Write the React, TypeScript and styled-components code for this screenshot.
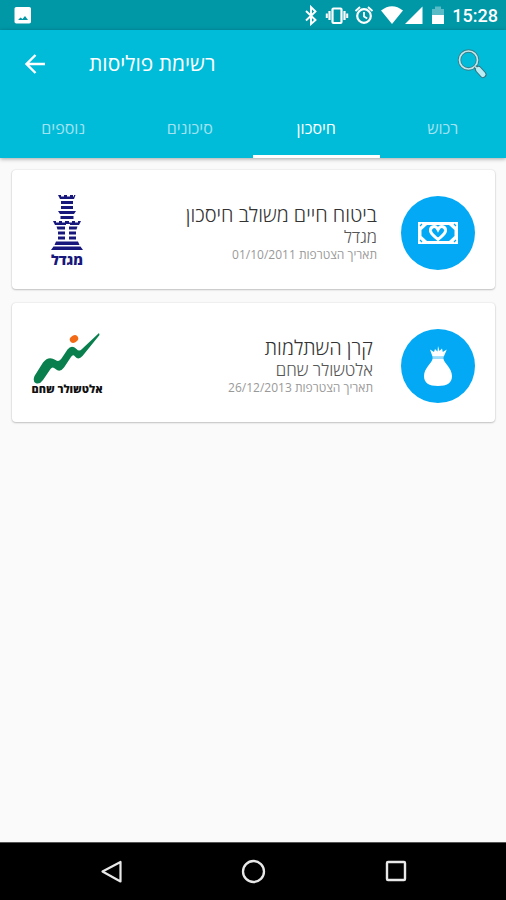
import React from "react";
import styled, { createGlobalStyle } from "styled-components";

const GlobalStyle = createGlobalStyle`
  *, *::before, *::after { box-sizing: border-box; }
  body {
    margin: 0;
    background: #fafafa;
    font-family: "Open Sans", "Noto Sans", sans-serif;
  }
  button { font: inherit; border: 0; padding: 0; background: none; color: inherit; cursor: pointer; }
  svg { display: block; }
`;

const Screen = styled.div`
  min-height: 100vh;
  display: flex;
  flex-direction: column;
`;

const StatusBar = styled.div`
  height: 30px;
  padding: 0 8px 0 14px;
  display: flex;
  align-items: center;
  justify-content: space-between;
  background: #0097a7;
  color: #fff;
`;

const StatusIcons = styled.div`
  display: flex;
  align-items: center;
`;

const Clock = styled.time`
  margin-left: 6px;
  padding-top: 2px;
  font: 500 18px/28px Roboto, sans-serif;
`;

const Header = styled.header`
  position: relative;
  background: #00bcd9;
  color: #fff;
  box-shadow: 0 1px 4px rgba(0, 0, 0, 0.35);
`;

const Toolbar = styled.div`
  height: 68px;
  padding: 0 14px 0 15px;
  display: flex;
  align-items: center;
`;

const IconButton = styled.button`
  width: 40px;
  height: 40px;
  display: grid;
  place-items: center;
`;

const Title = styled.h1`
  margin: 0 auto 0 34px;
  padding-bottom: 2px;
  font-size: 21px;
  line-height: 30px;
  font-weight: 500;
`;

const Tabs = styled.nav`
  display: grid;
  grid-template-columns: repeat(4, 1fr);
`;

const Tab = styled.button<{ $active?: boolean }>`
  && {
    height: 60px;
    padding-top: 3px;
    border-bottom: 3px solid ${(p) => (p.$active ? "#fff" : "transparent")};
    font-size: 16px;
    line-height: 24px;
    font-weight: ${(p) => (p.$active ? 500 : 400)};
    color: ${(p) => (p.$active ? "#fff" : "#a3e2f0")};
  }
`;

const List = styled.main`
  flex: 1;
  padding: 12px 11px 12px 12px;
  display: flex;
  flex-direction: column;
  gap: 14px;
`;

const Card = styled.article`
  min-height: 119px;
  padding: 6px 20px 0;
  display: flex;
  align-items: center;
  background: #fff;
  border-radius: 4px;
  box-shadow: 0 0 2px rgba(0, 0, 0, 0.14), 0 1px 2px rgba(0, 0, 0, 0.2);
`;

const Brand = styled.div`
  width: 70px;
  padding-bottom: 6px;
  display: flex;
  flex-direction: column;
  align-items: center;
`;

const BrandName = styled.span<{ $color: string; $size: number }>`
  font-weight: 800;
  font-size: ${(p) => p.$size}px;
  line-height: 10px;
  white-space: nowrap;
  color: ${(p) => p.$color};
`;

const Details = styled.div<{ $gap: number }>`
  flex: 1;
  margin-right: ${(p) => p.$gap}px;
  font-weight: 300;
`;

const PolicyName = styled.h2`
  margin: 0;
  font-size: 20px;
  line-height: 24px;
  font-weight: 300;
  color: #333;
`;

const Company = styled.p`
  margin: 0;
  font-size: 17px;
  line-height: 20px;
  color: #555;
`;

const Joined = styled.p`
  margin: 0;
  font-size: 12px;
  line-height: 16px;
  font-weight: 400;
  color: #999;
`;

const Badge = styled.div`
  width: 74px;
  height: 74px;
  border-radius: 50%;
  display: grid;
  place-items: center;
  background: #03a9f4;
`;

const SystemNav = styled.nav`
  height: 58px;
  padding: 0 41px;
  display: grid;
  grid-template-columns: repeat(3, 1fr);
  background: #000;
  border-top: 1px solid #555;
`;

const NavButton = styled.button`
  display: grid;
  place-items: center;
`;

const StatusGlyphs = () => (
  <svg width="142" height="22" viewBox="304 4 142 22" fill="none" stroke="#fff">
    <path d="M306 11 L315.500 20 L311 24 V7 L315.500 11.500 L306 20.500" strokeWidth="1.900" />
    <rect x="332.500" y="8.500" width="9" height="14.500" rx="1" strokeWidth="2.200" />
    <path d="M329.500 11v9M344.500 11v9" strokeWidth="2.200" />
    <path d="M326.800 13.500v4.500M347.200 13.500v4.500" strokeWidth="2" />
    <circle cx="364" cy="16" r="6.800" strokeWidth="2.200" />
    <path d="M364 12v4.500l3.200 2M355.500 11l4.500-4M372.500 11l-4.500-4" strokeWidth="1.800" />
    <path d="M381 10.500 Q392 2 403 10.500 L392 24Z" fill="#fff" stroke="none" />
    <path d="M405 24 L422.500 6.500 V24Z" fill="#fff" stroke="none" />
    <path d="M432 15V9h3V6.500h6V9h3v6Z" fill="#fff" fillOpacity="0.35" stroke="none" />
    <path d="M432 15h12v9h-12Z" fill="#fff" stroke="none" />
  </svg>
);

const PictureGlyph = () => (
  <svg width="18" height="18" viewBox="0 0 18 18">
    <rect x="0.500" y="1" width="16.500" height="16.500" rx="1.800" fill="#fff" />
    <path d="M4 14l2.500-2.500 2 1.500 2.500-3 3 4Z" fill="#0097a7" />
  </svg>
);

const BackArrow = () => (
  <svg width="22" height="22" viewBox="0 0 22 22" fill="none" stroke="#fff" strokeWidth="2.400">
    <path d="M21 11H3M11.500 2 2.500 11l9 9" />
  </svg>
);

const Magnifier = () => (
  <svg width="32" height="32" viewBox="0 0 32 32" fill="none">
    <circle cx="12.500" cy="12" r="9" stroke="#35808c" strokeWidth="3.400" />
    <circle cx="12.500" cy="12" r="9" stroke="#c5e6ea" strokeWidth="1.700" />
    <path d="M19 18.500l3 3" stroke="#35717c" strokeWidth="3.500" />
    <path d="M22.500 21.500l4.500 5" stroke="#35717c" strokeWidth="7" strokeLinecap="round" />
    <path d="M22.500 21.500l4.500 5" stroke="#b8edf5" strokeWidth="5" strokeLinecap="round" />
    <path d="M19 18.500l2.500 2.500" stroke="#c5e6ea" strokeWidth="1.500" />
  </svg>
);

const MigdalTower = () => (
  <svg width="34" height="60" viewBox="0 0 34 60" fill="#17177c">
    <path d="M8 0h3v1.500h3V0h3v1.500h3V0h3v1.500h1V0h1.500L24 4H10Z" />
    <path d="M11 6h12v3H11ZM11 11h12v3H11ZM8 16h18l-2 3H10ZM10.500 21h13v3h-13Z" />
    <path d="M3 26h3v1.500h3V26h3v1.500h3V26h4v1.500h3V26h3v1.500h3V26h3l-2 4h-9v-1h-4v1H5Z" />
    <path d="M6.500 31.500H15v3H7.500ZM19 31.500h8.500l-1 3H19ZM8 36.500h7v3H8ZM19 36.500h7v3h-7ZM8 41.500h7v3H8ZM19 41.500h7v3h-7Z" />
    <path d="M6 46.500h22l1.500 3.500h-25ZM3.500 51.500h27L33 55H1Z" />
  </svg>
);

const AltshulerMark = () => (
  <svg width="68" height="52" viewBox="0 0 68 52">
    <ellipse cx="41" cy="7" rx="4.400" ry="3.500" transform="rotate(-30 41 7)" fill="#f26a16" />
    <path
      d="M66 1 L66.500 3 L49.500 24 Q45.500 28.500 42 24.500 Q40 22 38 25 L31 35.500 Q27 41 22.500 37 Q19.500 34 17.500 37 L10 48 Q6.500 53 2.500 51 Q-0.500 49 1.500 44 L10 30.500 Q15.500 23.500 22.500 28 Q26 30.500 28.500 26.500 L34.500 17.500 Q38.500 12.500 43.500 17 Q46 20 49 17Z"
      fill="#087f4d"
    />
  </svg>
);

const Banknote = () => (
  <svg width="42" height="24" viewBox="0 0 42 24">
    <path d="M1 1h40v22H1Z" fill="#fff" />
    <path d="M10 4h22l5.500 5v6L32 20H10l-5.500-5V9Z" fill="#03a9f4" />
    <path d="M3 5l2-2M37 3l2 2M3 19l2 2M39 19l-2 2" stroke="#03a9f4" strokeWidth="1.200" />
    <path
      d="M21 8.500C18.500 3.500 13 5.500 13.500 10c.5 3.500 4.500 5.500 7.500 8.500 3-3 7-5 7.500-8.500C29 5.500 23.500 3.500 21 8.500Z"
      fill="#03a9f4"
      stroke="#fff"
      strokeWidth="3"
    />
  </svg>
);

const MoneyBag = () => (
  <svg width="30" height="42" viewBox="0 0 30 42" fill="#fff">
    <path d="M9.500 11.500 7 4.500l4 2.500 1-3 2.500 2.500L15 1l1.500 5 2.500-2.500.8 3.500 4-2.500-3 7Z" />
    <path d="M9.500 14h11c.5 4 8.500 9 8.500 17 0 7-5 10-14 10S1 38 1 31c0-8 8-13 8.500-17Z" />
    <path d="M9.500 11.500h11V14h-11Z" opacity="0.6" />
  </svg>
);

const tabs = ["נוספים", "סיכונים", "חיסכון", "רכוש"];

const policies = [
  {
    name: "ביטוח חיים משולב חיסכון",
    company: "מגדל",
    joined: "01/10/2011",
    gap: 24,
    icon: <Banknote />,
    mark: <MigdalTower />,
    brandColor: "#17177c",
    brandSize: 14,
  },
  {
    name: "קרן השתלמות",
    company: "אלטשולר שחם",
    joined: "26/12/2013",
    gap: 28,
    icon: <MoneyBag />,
    mark: <AltshulerMark />,
    brandColor: "#111",
    brandSize: 11,
  },
];

export default function App() {
  return (
    <Screen lang="he">
      <GlobalStyle />
      <StatusBar>
        <PictureGlyph />
        <StatusIcons>
          <StatusGlyphs />
          <Clock>15:28</Clock>
        </StatusIcons>
      </StatusBar>
      <Header>
        <Toolbar>
          <IconButton aria-label="חזרה">
            <BackArrow />
          </IconButton>
          <Title dir="rtl">רשימת פוליסות</Title>
          <IconButton aria-label="חיפוש">
            <Magnifier />
          </IconButton>
        </Toolbar>
        <Tabs>
          {tabs.map((tab) => (
            <Tab key={tab} $active={tab === "חיסכון"}>
              {tab}
            </Tab>
          ))}
        </Tabs>
      </Header>
      <List dir="rtl">
        {policies.map((p) => (
          <Card key={p.name}>
            <Badge>{p.icon}</Badge>
            <Details $gap={p.gap}>
              <PolicyName>{p.name}</PolicyName>
              <Company>{p.company}</Company>
              <Joined>תאריך הצטרפות {p.joined}</Joined>
            </Details>
            <Brand>
              {p.mark}
              <BrandName $color={p.brandColor} $size={p.brandSize}>
                {p.company}
              </BrandName>
            </Brand>
          </Card>
        ))}
      </List>
      <SystemNav>
        <NavButton aria-label="Back">
          <svg width="26" height="26" viewBox="0 0 26 26" fill="none" stroke="#e8e8e8" strokeWidth="2.200" strokeLinejoin="round">
            <path d="M3.500 12.500 21.500 3v19.500Z" />
          </svg>
        </NavButton>
        <NavButton aria-label="Home">
          <svg width="26" height="26" viewBox="0 0 26 26" fill="none" stroke="#e8e8e8" strokeWidth="2.300">
            <circle cx="13.500" cy="12.500" r="10.500" />
          </svg>
        </NavButton>
        <NavButton aria-label="Recent apps">
          <svg width="26" height="26" viewBox="0 0 26 26" fill="none" stroke="#e8e8e8" strokeWidth="2.400">
            <rect x="6" y="3" width="18" height="18" rx="1" />
          </svg>
        </NavButton>
      </SystemNav>
    </Screen>
  );
}
